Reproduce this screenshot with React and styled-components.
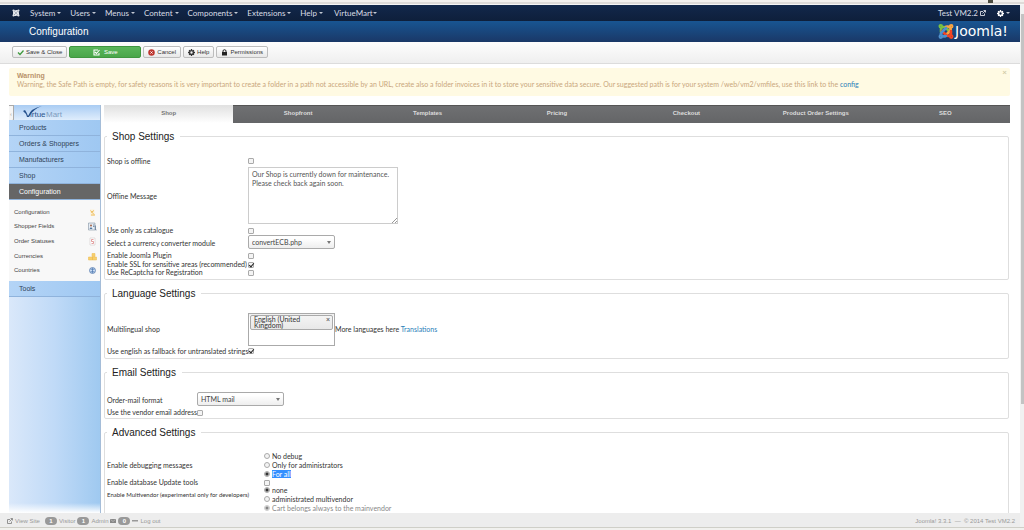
import React from "react";
import styled, { createGlobalStyle, css } from "styled-components";

const heading = `"Liberation Sans", Arial, sans-serif`;

const Global = createGlobalStyle`
  * { box-sizing: border-box; }
  html, body { margin: 0; background: #fff; }
  body {
    font-family: Lato, "Liberation Sans", Arial, sans-serif;
    font-size: 7px;
    line-height: 9px;
    color: #333;
    overflow: hidden;
  }
  button, input, select, textarea { font: inherit; color: inherit; margin: 0; }
  a { text-decoration: none; color: #2a80b9; }
`;

const Page = styled.div`
  height: 100vh;
  display: grid;
  grid-template-columns: minmax(0, 1fr) 4px;
  grid-template-rows: 5px minmax(0, 1fr) 3px;
`;
const BrowserEdge = styled.div`
  grid-column: 1 / -1;
  display: flex;
  justify-content: flex-end;
  padding-right: 31px;
  background: linear-gradient(#f3f1ee 0 2px, #dedbd8 2px 4px, #f5f5f5 4px);
`;
const EdgeMark = styled.span`
  width: 5px;
  height: 3px;
  background: #4c4c40;
`;
const BottomEdge = styled.div`
  grid-column: 1 / -1;
  background: linear-gradient(#cfcfc8 0 1px, #f1f1ee 1px);
`;
const ScrollTrack = styled.div`
  background: #f1f1f1;
  padding: 9px 0 0 1px;
`;
const ScrollThumb = styled.div`
  height: 76%;
  background: #c3c3c3;
`;
const Window = styled.div`
  display: flex;
  flex-direction: column;
  min-height: 0;
`;

const NavBar = styled.nav`
  flex: none;
  height: 16px;
  display: flex;
  align-items: center;
  padding: 0 10px 0 12px;
  background: linear-gradient(#12284b, #0e1f3b);
  color: #d9dde4;
  font-size: 8px;
`;
const NavLogo = styled.svg`
  width: 8px;
  height: 8px;
  margin-right: 10px;
`;
const NavItem = styled.a`
  display: flex;
  align-items: center;
  gap: ${(p) => (p.$tight ? "0" : "2px")};
  margin-right: ${(p) => (p.$wide ? "11px" : "9px")};
  color: #d9dde4;
  &::after {
    content: "";
    border: 2px solid transparent;
    border-top-color: #c3c9d3;
    border-bottom: 0;
  }
`;
const NavRight = styled.div`
  margin-left: auto;
  display: flex;
  align-items: center;
  gap: 3px;
  a { color: #d9dde4; display: flex; align-items: center; gap: 2px; }
  a + a { margin-left: 8px; }
`;
const Caret = styled.span`
  border: 2px solid transparent;
  border-top-color: #c3c9d3;
  border-bottom: 0;
`;

const Header = styled.header`
  flex: none;
  height: 21px;
  display: flex;
  align-items: center;
  justify-content: space-between;
  padding: 0 12px 0 29px;
  background: linear-gradient(#185592, #1a3867);
`;
const PageTitle = styled.h1`
  margin: 0;
  font-family: ${heading};
  font-size: 10px;
  line-height: 12px;
  font-weight: normal;
  color: #fff;
`;
const Brand = styled.svg`
  width: 70px;
  height: 17px;
`;

const Toolbar = styled.div`
  flex: none;
  height: 22px;
  display: flex;
  align-items: center;
  gap: 2px;
  padding: 0 12px 1px;
  background: linear-gradient(#fdfdfd, #efefef);
  border-bottom: 1px solid #dcdcdc;
`;
const ToolButton = styled.button`
  height: 12px;
  display: flex;
  align-items: center;
  justify-content: center;
  gap: 2px;
  padding: 0 4px;
  font-family: ${heading};
  font-size: 6px;
  line-height: 8px;
  border: 1px solid #bdbdbd;
  border-radius: 2px;
  background: linear-gradient(#fff, #e8e8e8);
  color: #333;
  svg { width: 7px; height: 7px; flex: none; }
  ${(p) =>
    p.$primary &&
    css`
      width: 72px;
      gap: 4px;
      border-color: #409740;
      background: linear-gradient(#5bb75b, #4aa64a);
      color: #fff;
    `}
`;

const Body = styled.div`
  flex: 1;
  min-height: 0;
  overflow: hidden;
  display: flex;
  flex-direction: column;
  padding: 4px 10px 0 9px;
`;
const Alert = styled.div`
  flex: none;
  min-height: 28px;
  display: flex;
  justify-content: space-between;
  margin-bottom: 9px;
  padding: 4px 3px 0 8px;
  background: #fffae3;
  color: #c9a67c;
  border-radius: 2px;
  line-height: 8px;
  h4 { margin: 0; font-family: ${heading}; font-size: 7px; line-height: 8px; color: #b9936a; }
  p { margin: 0; font-size: 7px; }
`;
const CloseButton = styled.button`
  align-self: flex-start;
  padding: 0;
  border: 0;
  background: none;
  font-size: 8px;
  line-height: 1;
  font-weight: bold;
  margin-top: -4px;
  color: #d2cba8;
`;

const Main = styled.div`
  flex: 1;
  min-height: 0;
  display: grid;
  grid-template-columns: 92px minmax(0, 1fr);
  column-gap: 3px;
`;
const Sidebar = styled.aside`
  min-height: 0;
  overflow: hidden;
  display: flex;
  flex-direction: column;
  background: linear-gradient(transparent calc(100% - 10px), #fff 100%),
    linear-gradient(90deg, #dae8fa, #c0daf7 50%, #9fc9f0);
  border-right: 1px solid #a5bdd8;
`;
const SideLogo = styled.div`
  flex: none;
  height: 15px;
  display: flex;
  background: linear-gradient(#a9ccf3, #dfedfc);
  svg { width: 44px; height: 15px; }
`;
const Collapse = styled.button`
  width: 5px;
  height: 17px;
  margin-right: 8px;
  padding: 0;
  border: 1px solid #aaa;
  border-left: 0;
  border-radius: 0 0 3px 0;
  background: #f5f5f5;
  font-size: 5px;
  line-height: 8px;
  color: #666;
`;
const SideItem = styled.a`
  flex: none;
  height: 16px;
  padding: 0 10px;
  font-family: ${heading};
  line-height: 15px;
  border-bottom: 1px solid #8fb3dc;
  background: ${(p) => (p.$active ? "#666" : "linear-gradient(90deg, #b4d4f6, #9fc8f2)")};
  color: ${(p) => (p.$active ? "#fff" : "#2f4257")};
`;
const SubMenu = styled.div`
  flex: none;
  height: 81px;
  display: grid;
  grid-auto-rows: 1fr;
  padding: 5px 3px 3px 5px;
  background: #f8f8f8;
`;
const SubItem = styled.a`
  display: flex;
  align-items: center;
  justify-content: space-between;
  font-family: ${heading};
  font-size: 6px;
  color: #444;
  svg { width: 9px; height: 9px; }
`;

const Content = styled.main`
  min-width: 0;
  min-height: 0;
  overflow: hidden;
  display: flex;
  flex-direction: column;
  gap: 6px;
`;
const Tabs = styled.div`
  flex: none;
  display: flex;
  height: 18px;
`;
const Tab = styled.button`
  flex: 1;
  padding: 0 0 2px;
  border: 0;
  border-top: 1px solid ${(p) => (p.$active ? "#e2e2e2" : "#555")};
  font-family: ${heading};
  font-size: 6px;
  font-weight: bold;
  background: ${(p) => (p.$active ? "linear-gradient(#e2e2e2, #fff)" : "linear-gradient(#6f7072, #646567)")};
  color: ${(p) => (p.$active ? "#777" : "#dcdcdc")};
`;

const Panel = styled.fieldset`
  flex: none;
  min-width: 0;
  margin: 0 1px 0 0;
  padding: 12px 2px 2px;
  border: 1px solid #dedede;
  border-radius: 2px;
`;
const PanelTitle = styled.legend`
  padding: 1px 6px 0 5px;
  font-family: ${heading};
  font-size: 10px;
  line-height: 14px;
  color: #222;
`;
const Row = styled.div`
  display: grid;
  grid-template-columns: ${(p) => p.$label || 141}px minmax(0, 1fr);
  align-items: center;
  height: ${(p) => p.$height || 9}px;
`;
const RowLabel = styled.label`
  white-space: nowrap;
  font-size: ${(p) => (p.$small ? 6 : 7)}px;
`;
const Field = styled.div`
  display: flex;
  align-items: center;
  height: 100%;
`;
const TickBox = styled.input.attrs({ type: "checkbox" })`
  appearance: none;
  width: 6px;
  height: 6px;
  border: 1px solid #aaa;
  border-radius: 1px;
  background: #f4f4f4;
  position: relative;
  &:checked::after {
    content: "";
    position: absolute;
    left: 1px;
    top: -1px;
    width: 2px;
    height: 4px;
    border: solid #222;
    border-width: 0 1px 1px 0;
    transform: rotate(40deg);
  }
`;
const RadioDot = styled.input.attrs({ type: "radio" })`
  appearance: none;
  width: 6px;
  height: 6px;
  border: 1px solid #aaa;
  border-radius: 50%;
  background: #f4f4f4;
  &:checked { background: radial-gradient(#333 0 1px, #ccc 2px); }
`;
const Message = styled.textarea`
  width: 150px;
  height: 57px;
  margin-top: 1px;
  padding: 2px 3px;
  border: 1px solid #ccc;
  color: #555;
  line-height: 9px;
  resize: none;
`;
const MessageWrap = styled.div`
  display: grid;
  align-self: start;
  svg { grid-area: 1 / 1; place-self: end; width: 6px; height: 6px; margin: 0 1px 1px 0; }
  textarea { grid-area: 1 / 1; }
`;
const SelectWrap = styled.div`
  display: flex;
  align-items: center;
  align-self: flex-start;
  width: 87px;
  height: 14px;
  padding-right: 3px;
  border: 1px solid #aaa;
  border-radius: 2px;
  background: linear-gradient(#fff 20%, #eee);
  &::after {
    content: "";
    border: 2px solid transparent;
    border-top: 3px solid #777;
    border-bottom: 0;
  }
`;
const Select = styled.select`
  flex: 1;
  appearance: none;
  border: 0;
  padding: 0 3px;
  background: none;
  color: #444;
`;
const Chosen = styled.div`
  align-self: flex-start;
  width: 87px;
  height: 33px;
  padding: 1px;
  border: 1px solid #aaa;
  background: linear-gradient(#eee, #fff 15%);
`;
const Chip = styled.div`
  display: flex;
  justify-content: space-between;
  align-items: flex-start;
  height: 15px;
  padding: 0 2px 0 3px;
  border: 1px solid #aaa;
  border-radius: 2px;
  background: linear-gradient(#f4f4f4, #e8e8e8);
  line-height: 6px;
  span { width: 52px; }
  button { padding: 0; border: 0; background: none; font-weight: bold; line-height: 7px; color: #666; }
`;
const Options = styled.div`
  display: grid;
  grid-auto-rows: 1fr;
  height: 100%;
`;
const Option = styled.label`
  display: flex;
  align-items: center;
  gap: 2px;
  opacity: ${(p) => (p.$faded ? 0.6 : 1)};
  span { line-height: 8px; }
  mark { background: #3390ff; color: #fff; line-height: 8px; }
`;

const Footer = styled.footer`
  flex: none;
  height: 14px;
  display: flex;
  align-items: center;
  gap: 2px;
  padding: 2px 5px 0 7px;
  background: #ededed;
  color: #999;
  font-family: ${heading};
  font-size: 6px;
  a { color: #999; margin-right: 3px; }
  svg { width: 6px; height: 6px; }
`;
const Badge = styled.span`
  min-width: 12px;
  height: 8px;
  border-radius: 4px;
  background: #999;
  color: #fff;
  font-weight: bold;
  line-height: 8px;
  text-align: center;
`;
const Copyright = styled.span`
  margin-left: auto;
`;

const JoomlaMark = ({ c }) => (
  <g fill="none" strokeWidth="2.6" strokeLinecap="round" strokeLinejoin="round">
    <path d="M3 9V6.500Q3 4 5.500 4Q7 4 8 5L12 9" stroke={c[0]} />
    <path d="M8 3.800Q10 3 12 4.500Q13.500 6 12 8L7 13" stroke={c[1]} />
    <path d="M13 8V10Q13 13 10.500 13Q9 13 8 12L4 8" stroke={c[2]} />
    <path d="M8 13Q5 14 3.500 12.500Q2 11 4 9L8 5" stroke={c[3]} />
    <circle cx="2.800" cy="3.200" r="1" stroke={c[0]} />
    <circle cx="13.200" cy="3.200" r="1" stroke={c[1]} />
    <circle cx="13.200" cy="13.600" r="1" stroke={c[2]} />
    <circle cx="2.800" cy="13.600" r="1" stroke={c[3]} />
  </g>
);
const Gear = ({ color }) => (
  <svg viewBox="0 0 16 16" width="7" height="7" aria-hidden="true">
    <circle cx="8" cy="8" r="4.300" fill="none" stroke={color} strokeWidth="3.200" />
    <path d="M8 0V3M8 13V16M0 8H3M13 8H16M2.500 2.500L4.500 4.500M11.500 11.500L13.500 13.500M13.500 2.500L11.500 4.500M4.500 11.500L2.500 13.500" stroke={color} strokeWidth="3" />
  </svg>
);
const External = ({ color }) => (
  <svg viewBox="0 0 12 12" width="6" height="6" aria-hidden="true">
    <path d="M6 3H1V11H9V7M7 1H11V5M11 1L5 7" fill="none" stroke={color} strokeWidth="1.800" />
  </svg>
);

const subIcons = {
  config: (
    <svg viewBox="0 0 18 18"><path d="M4 3H13V16H5Z" fill="#fbf1da" /><path d="M5 5L12 13M12 5L6 9M6 14H14" stroke="#efc063" strokeWidth="2" fill="none" /></svg>
  ),
  fields: (
    <svg viewBox="0 0 18 18"><path d="M1 2H14V16H1Z" fill="#e6edf5" stroke="#6f8193" /><circle cx="6" cy="7" r="2" fill="#a5674a" /><path d="M3 14Q6 7 9 14Z" fill="#53799f" /><path d="M10 6H13M10 9H13M15 7V16H17" stroke="#59748f" strokeWidth="1.500" fill="none" /></svg>
  ),
  status: (
    <svg viewBox="0 0 18 18"><path d="M4 2H14V16H4Z" fill="#fff" stroke="#c9c0c0" /><path d="M11 5H7V9H11V13H7" stroke="#d98080" strokeWidth="1.500" fill="none" /></svg>
  ),
  money: (
    <svg viewBox="0 0 18 18"><path d="M1 10H9V16H1ZM8 3H14V9H8ZM9 10H17V16H9Z" fill="#f7cf6d" stroke="#edb84b" /></svg>
  ),
  globe: (
    <svg viewBox="0 0 18 18"><circle cx="9" cy="9" r="6" fill="#c9dcf2" stroke="#5479ae" strokeWidth="1.500" /><path d="M9 4V14M5 6Q9 8 13 6M5 12Q9 10 13 12" stroke="#4f78b0" strokeWidth="1.500" fill="none" /></svg>
  ),
};

const menus = ["System", "Users", "Menus", "Content", "Components", "Extensions", "Help"];
const tabs = ["Shop", "Shopfront", "Templates", "Pricing", "Checkout", "Product Order Settings", "SEO"];
const subItems = [
  ["Configuration", "config"],
  ["Shopper Fields", "fields"],
  ["Order Statuses", "status"],
  ["Currencies", "money"],
  ["Countries", "globe"],
];

function CheckRow({ id, text, checked, label, height }) {
  return (
    <Row $label={label} $height={height}>
      <RowLabel htmlFor={id}>{text}</RowLabel>
      <Field><TickBox id={id} defaultChecked={checked} /></Field>
    </Row>
  );
}

export default function App() {
  return (
    <Page>
      <Global />
      <BrowserEdge><EdgeMark /></BrowserEdge>
      <Window>
        <NavBar>
          <NavLogo viewBox="0 0 16 17" aria-hidden="true"><JoomlaMark c={["#e8ebf0", "#e8ebf0", "#e8ebf0", "#e8ebf0"]} /></NavLogo>
          {menus.map((m) => (
            <NavItem key={m} href="#" $wide={m === "Help"}>{m}</NavItem>
          ))}
          <NavItem href="#" $tight>VirtueMart</NavItem>
          <NavRight>
            <a href="#">Test VM2.2 <External color="#d9dde4" /></a>
            <a href="#" aria-label="Settings"><Gear color="#fff" /><Caret /></a>
          </NavRight>
        </NavBar>
        <Header>
          <PageTitle>Configuration</PageTitle>
          <Brand viewBox="0 0 70 17" role="img" aria-label="Joomla!">
            <JoomlaMark c={["#7ac143", "#f9a541", "#f44321", "#5091cd"]} />
            <text x="17" y="13" fontSize="14" fill="#fff" fontFamily="DejaVu Sans, sans-serif">Joomla!</text>
          </Brand>
        </Header>
        <Toolbar>
          <ToolButton>
            <svg viewBox="0 0 14 14"><path d="M2 7L6 11L13 3" fill="none" stroke="#3f9a3f" strokeWidth="2.600" /></svg>
            Save &amp; Close
          </ToolButton>
          <ToolButton $primary>
            <svg viewBox="0 0 14 14"><path d="M10 2H2V12H12V8M4 6L7 9L13 2" fill="none" stroke="#fff" strokeWidth="2.200" /></svg>
            Save
          </ToolButton>
          <ToolButton>
            <svg viewBox="0 0 14 14"><circle cx="7" cy="7" r="6.500" fill="#bd362f" /><path d="M5 5L9 9M9 5L5 9" stroke="#fff" strokeWidth="2" /></svg>
            Cancel
          </ToolButton>
          <ToolButton><Gear color="#333" />Help</ToolButton>
          <ToolButton>
            <svg viewBox="0 0 14 14"><path d="M2 6H12V13H2Z" fill="#222" /><path d="M4 6V4Q4 1.500 7 1.500Q10 1.500 10 4V6" fill="none" stroke="#222" strokeWidth="2" /></svg>
            Permissions
          </ToolButton>
        </Toolbar>
        <Body>
          <Alert role="alert">
            <div>
              <h4>Warning</h4>
              <p>
                Warning, the Safe Path is empty, for safety reasons it is very important to create a folder in a path not
                accessible by an URL, create also a folder invoices in it to store your sensitive data secure. Our suggested
                path is for your system /web/vm2/vmfiles, use this link to the <a href="#">config</a>
              </p>
            </div>
            <CloseButton aria-label="Close">×</CloseButton>
          </Alert>
          <Main>
            <Sidebar>
              <SideLogo>
                <Collapse aria-label="Collapse menu">‹</Collapse>
                <svg viewBox="0 0 44 15" role="img" aria-label="VirtueMart">
                  <path d="M3 5Q5 8 6 11Q9 3 20 1Q11 4 7 12H5Q4 8 1 6Z" fill="#24508c" />
                  <text x="8" y="12" fontSize="8" fill="#2b568e" fontFamily="Liberation Sans, sans-serif">irtue</text>
                  <text x="24" y="12" fontSize="8" fill="#7d9cc0" fontFamily="Liberation Sans, sans-serif">Mart</text>
                </svg>
              </SideLogo>
              {["Products", "Orders & Shoppers", "Manufacturers", "Shop"].map((t) => (
                <SideItem key={t} href="#">{t}</SideItem>
              ))}
              <SideItem href="#" $active>Configuration</SideItem>
              <SubMenu>
                {subItems.map(([t, icon]) => (
                  <SubItem key={t} href="#">{t}{subIcons[icon]}</SubItem>
                ))}
              </SubMenu>
              <SideItem href="#">Tools</SideItem>
            </Sidebar>
            <Content>
              <Tabs role="tablist">
                {tabs.map((t, i) => (
                  <Tab key={t} role="tab" aria-selected={i === 0} $active={i === 0}>{t}</Tab>
                ))}
              </Tabs>
              <Panel>
                <PanelTitle>Shop Settings</PanelTitle>
                <CheckRow id="offline" text="Shop is offline" height={10} />
                <Row $height={60}>
                  <RowLabel htmlFor="message">Offline Message</RowLabel>
                  <Field>
                    <MessageWrap>
                      <Message id="message" defaultValue={"Our Shop is currently down for maintenance.\nPlease check back again soon."} />
                      <svg viewBox="0 0 6 6" aria-hidden="true"><path d="M1 6L6 1M4 6L6 4" stroke="#999" strokeWidth="1" /></svg>
                    </MessageWrap>
                  </Field>
                </Row>
                <CheckRow id="catalogue" text="Use only as catalogue" />
                <Row $height={16}>
                  <RowLabel htmlFor="converter">Select a currency converter module</RowLabel>
                  <Field>
                    <SelectWrap><Select id="converter"><option>convertECB.php</option></Select></SelectWrap>
                  </Field>
                </Row>
                <CheckRow id="plugin" text="Enable Joomla Plugin" />
                <CheckRow id="ssl" text="Enable SSL for sensitive areas (recommended)" checked height={8} />
                <CheckRow id="captcha" text="Use ReCaptcha for Registration" />
              </Panel>
              <Panel>
                <PanelTitle>Language Settings</PanelTitle>
                <Row $height={33}>
                  <RowLabel as="span">Multilingual shop</RowLabel>
                  <Field>
                    <Chosen>
                      <Chip><span>English (United Kingdom)</span><button aria-label="Remove language">×</button></Chip>
                    </Chosen>
                    <span>More languages here <a href="#">Translations</a></span>
                  </Field>
                </Row>
                <CheckRow id="fallback" text="Use english as fallback for untranslated strings" checked height={10} />
              </Panel>
              <Panel>
                <PanelTitle>Email Settings</PanelTitle>
                <Row $label={90} $height={16}>
                  <RowLabel htmlFor="format">Order-mail format</RowLabel>
                  <Field>
                    <SelectWrap><Select id="format"><option>HTML mail</option></Select></SelectWrap>
                  </Field>
                </Row>
                <CheckRow id="vendor" text="Use the vendor email address" label={90} height={8} />
              </Panel>
              <Panel>
                <PanelTitle>Advanced Settings</PanelTitle>
                <Row $label={157} $height={26}>
                  <RowLabel as="span">Enable debugging messages</RowLabel>
                  <Options role="radiogroup" aria-label="Enable debugging messages">
                    <Option><RadioDot name="debug" /><span>No debug</span></Option>
                    <Option><RadioDot name="debug" /><span>Only for administrators</span></Option>
                    <Option><RadioDot name="debug" defaultChecked /><mark>For all</mark></Option>
                  </Options>
                </Row>
                <CheckRow id="update" text="Enable database Update tools" label={157} height={8} />
                <Row $label={157} $height={17}>
                  <RowLabel as="span" $small>Enable Multivendor (experimental only for developers)</RowLabel>
                  <Options role="radiogroup" aria-label="Enable Multivendor">
                    <Option><RadioDot name="vendor" defaultChecked /><span>none</span></Option>
                    <Option><RadioDot name="vendor" /><span>administrated multivendor</span></Option>
                  </Options>
                </Row>
                <Row $label={157}>
                  <span />
                  <Option $faded><RadioDot name="cart" defaultChecked /><span>Cart belongs always to the mainvendor</span></Option>
                </Row>
              </Panel>
            </Content>
          </Main>
        </Body>
        <Footer>
          <External color="#888" />
          <a href="#">View Site</a>
          <Badge>1</Badge>
          <span>Visitor</span>
          <Badge>1</Badge>
          <span>Admin</span>
          <svg viewBox="0 0 12 12" aria-hidden="true"><path d="M0 2H12V10H0Z" fill="#888" /><path d="M1 3L6 7L11 3" stroke="#ddd" fill="none" /></svg>
          <Badge>0</Badge>
          <svg viewBox="0 0 12 12" aria-hidden="true"><path d="M0 4H12V7H0Z" fill="#999" /></svg>
          <a href="#">Log out</a>
          <Copyright>Joomla! 3.3.1 &nbsp;—&nbsp; © 2014 Test VM2.2</Copyright>
        </Footer>
      </Window>
      <ScrollTrack><ScrollThumb /></ScrollTrack>
      <BottomEdge />
    </Page>
  );
}
